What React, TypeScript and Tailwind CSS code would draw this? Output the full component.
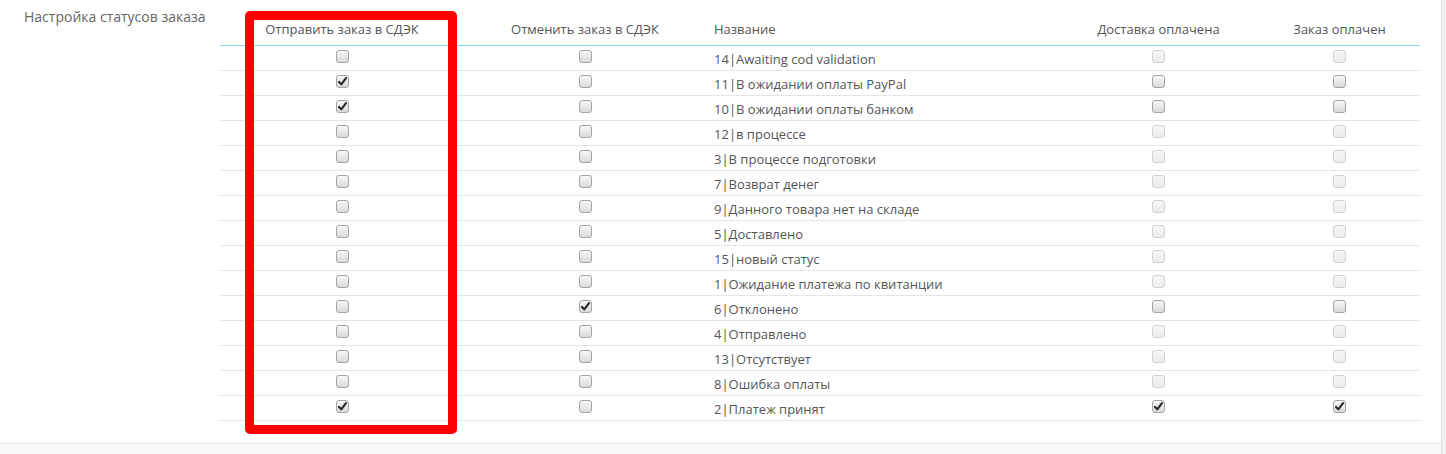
import React from "react";

type Row = {
  id: string;
  name: string;
  send: boolean;
  cancel: boolean;
  enabled: boolean;
  delivery: boolean;
  paid: boolean;
};

const rows: Row[] = [
  { id: "14", name: "Awaiting cod validation", send: false, cancel: false, enabled: false, delivery: false, paid: false },
  { id: "11", name: "В ожидании оплаты PayPal", send: true, cancel: false, enabled: true, delivery: false, paid: false },
  { id: "10", name: "В ожидании оплаты банком", send: true, cancel: false, enabled: true, delivery: false, paid: false },
  { id: "12", name: "в процессе", send: false, cancel: false, enabled: false, delivery: false, paid: false },
  { id: "3", name: "В процессе подготовки", send: false, cancel: false, enabled: false, delivery: false, paid: false },
  { id: "7", name: "Возврат денег", send: false, cancel: false, enabled: false, delivery: false, paid: false },
  { id: "9", name: "Данного товара нет на складе", send: false, cancel: false, enabled: false, delivery: false, paid: false },
  { id: "5", name: "Доставлено", send: false, cancel: false, enabled: false, delivery: false, paid: false },
  { id: "15", name: "новый статус", send: false, cancel: false, enabled: false, delivery: false, paid: false },
  { id: "1", name: "Ожидание платежа по квитанции", send: false, cancel: false, enabled: false, delivery: false, paid: false },
  { id: "6", name: "Отклонено", send: false, cancel: true, enabled: true, delivery: false, paid: false },
  { id: "4", name: "Отправлено", send: false, cancel: false, enabled: false, delivery: false, paid: false },
  { id: "13", name: "Отсутствует", send: false, cancel: false, enabled: false, delivery: false, paid: false },
  { id: "8", name: "Ошибка оплаты", send: false, cancel: false, enabled: false, delivery: false, paid: false },
  { id: "2", name: "Платеж принят", send: true, cancel: false, enabled: true, delivery: true, paid: true },
];

function Box({ checked, disabled }: { checked?: boolean; disabled?: boolean }) {
  return (
    <span
      className={
        disabled
          ? "mb-[3px] flex h-[13px] w-[13px] items-center justify-center rounded-[3px] border border-[#d2d2d2] bg-linear-to-b from-[#f6f6f6] to-[#ececec]"
          : "mb-[3px] flex h-[13px] w-[13px] items-center justify-center rounded-[3px] border border-[#a3a3a3] bg-linear-to-b from-[#f7f7f7] to-[#dadada]"
      }
    >
      {checked && (
        <svg width="11" height="11" viewBox="0 0 11 11">
          <path d="M2 6 L4.3 8.3 L9 2.2" fill="none" stroke="#2a2a2a" strokeWidth="2.2" strokeLinecap="round" strokeLinejoin="round" />
        </svg>
      )}
    </span>
  );
}

const grid = "grid grid-cols-[244px_242px_352px_201px_161px]";

export default function App() {
  return (
    <div className="relative flex h-[454px] w-full bg-[#eff1f2] font-['Open_Sans',sans-serif] text-[13px] text-[#555]">
      <div className="flex w-[1442px] flex-col border-r border-[#dcdfe2] bg-white">
        <div className="flex h-[444px] border-b border-[#e6e6e6]">
          <div className="w-[220px] pl-[24px] pt-[7px] text-[14px] leading-[20px] text-[#666]">
            Настройка статусов заказа
          </div>
          <div className="w-[1200px] pt-[13px]">
            <div className={`${grid} h-[33px] items-center border-b border-[#94cde9] leading-[18px]`}>
              <div className="text-center">Отправить заказ в СДЭК</div>
              <div className="text-center">Отменить заказ в СДЭК</div>
              <div className="pl-[8px]">Название</div>
              <div className="text-center">Доставка оплачена</div>
              <div className="text-center">Заказ оплачен</div>
            </div>
            {rows.map((r) => (
              <div key={r.id} className={`${grid} h-[25px] items-center border-b border-[#e5e5e5] leading-[18px]`}>
                <div className="flex justify-center">
                  <Box checked={r.send} />
                </div>
                <div className="flex justify-center">
                  <Box checked={r.cancel} />
                </div>
                <div className="pl-[8px] pt-[1px]">
                  {r.id}|{r.name}
                </div>
                <div className="flex justify-center">
                  <Box checked={r.delivery} disabled={!r.enabled} />
                </div>
                <div className="flex justify-center">
                  <Box checked={r.paid} disabled={!r.enabled} />
                </div>
              </div>
            ))}
          </div>
        </div>
        <div className="flex-1 bg-[#f8f9fb]" />
      </div>
      <div className="pointer-events-none absolute left-[245px] top-[11px] h-[423px] w-[212px] rounded-[5px] border-[9px] border-[#ff0000]" />
    </div>
  );
}
